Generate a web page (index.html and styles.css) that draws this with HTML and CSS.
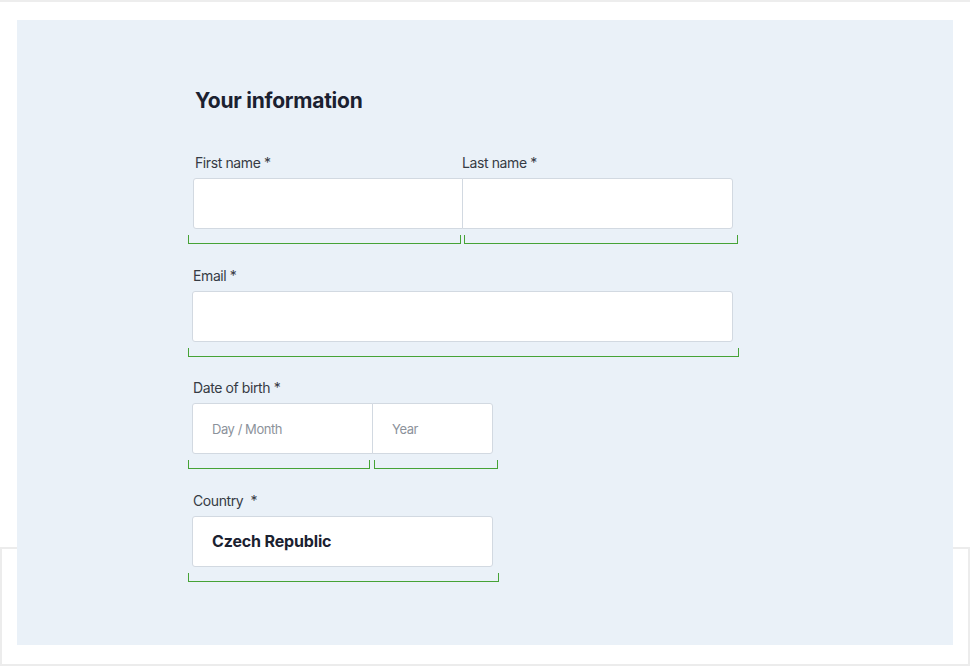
FILE: index.html
```html
<!DOCTYPE html>
<html lang="en">
<head>
<meta charset="utf-8">
<title>Your information</title>
<link rel="stylesheet" href="styles.css">
</head>
<body>
<div class="page">
  <main class="panel">
    <form class="form">
      <h1 class="title">Your information</h1>
      <div class="groups">
        <section class="group">
          <div class="labels labels-names">
            <span class="label label-first">First name *</span>
            <span class="label">Last name *</span>
          </div>
          <div class="inputs inputs-names">
            <div class="input input-first input-join-left"></div>
            <div class="input input-last input-join-right"></div>
          </div>
          <div class="brackets brackets-names">
            <span class="bracket b-first"></span>
            <span class="bracket b-last"></span>
          </div>
        </section>

        <section class="group">
          <div class="labels labels-std">
            <span class="label">Email *</span>
          </div>
          <div class="inputs inputs-std">
            <div class="input input-email"></div>
          </div>
          <div class="brackets">
            <span class="bracket b-email"></span>
          </div>
        </section>

        <section class="group">
          <div class="labels labels-std">
            <span class="label">Date of birth *</span>
          </div>
          <div class="inputs inputs-std">
            <div class="input input-day input-join-left"><span class="placeholder">Day / Month</span></div>
            <div class="input input-year input-join-right"><span class="placeholder">Year</span></div>
          </div>
          <div class="brackets brackets-dob">
            <span class="bracket b-day"></span>
            <span class="bracket b-year"></span>
          </div>
        </section>

        <section class="group">
          <div class="labels labels-std">
            <span class="label">Country&nbsp; *</span>
          </div>
          <div class="inputs inputs-std">
            <div class="input input-country"><span class="value">Czech Republic</span></div>
          </div>
          <div class="brackets">
            <span class="bracket b-country"></span>
          </div>
        </section>
      </div>
    </form>
  </main>
</div>
</body>
</html>
```

FILE: styles.css
```css
* {
  box-sizing: border-box;
}

html, body {
  margin: 0;
  padding: 0;
  background: #ffffff;
}

body {
  font-family: "Inter", "Noto Sans", "Liberation Sans", sans-serif;
  color: #3b4049;
  width: 970px;
  height: 666px;
  overflow: hidden;
}

.page {
  position: relative;
  height: 666px;
  border-top: 2px solid #ededed;
  padding: 18px 17px 0 17px;
}

.page::before {
  content: "";
  position: absolute;
  left: 0;
  right: 0;
  top: 545px;
  bottom: 0;
  border: 2px solid #ececec;
  z-index: 0;
}

.panel {
  position: relative;
  z-index: 1;
  height: 625px;
  background: #eaf1f8;
  padding: 68px 0 0 171px;
}

.form {
  width: 552px;
  margin: 0;
}

.title {
  margin: 0 0 40px 0;
  padding-left: 7px;
  font-size: 21px;
  line-height: 26px;
  font-weight: 700;
  color: #1b2130;
  letter-spacing: -0.25px;
}

.groups {
  display: flex;
  flex-direction: column;
  gap: 22.5px;
}

.group {
  display: flex;
  flex-direction: column;
}

.labels {
  display: flex;
  height: 17px;
  margin-bottom: 7px;
}

.labels-names {
  padding-left: 7px;
}

.labels-std {
  padding-left: 5px;
}

.label {
  font-size: 14px;
  line-height: 17px;
  color: #363b44;
  white-space: nowrap;
  letter-spacing: -0.4px;
}

.label-first {
  width: 267px;
}

.inputs {
  display: flex;
}

.inputs-names {
  padding-left: 5px;
}

.inputs-std {
  padding-left: 4px;
}

.input {
  height: 51px;
  background: #ffffff;
  border: 1px solid #d2d9e1;
  border-radius: 3px;
  display: flex;
  align-items: center;
  padding-left: 19px;
}

.input-join-left {
  border-top-right-radius: 0;
  border-bottom-right-radius: 0;
}

.input-join-right {
  margin-left: -1px;
  border-top-left-radius: 0;
  border-bottom-left-radius: 0;
}

.input-first { width: 270px; }
.input-last { width: 271px; }
.input-email { width: 541px; }
.input-day { width: 181px; }
.input-year { width: 121px; }
.input-country { width: 301px; }

.placeholder {
  font-size: 13px;
  color: #8c929b;
  letter-spacing: -0.45px;
}

.value {
  font-size: 16px;
  font-weight: 700;
  color: #1b2130;
  letter-spacing: -0.15px;
}

.brackets {
  display: flex;
  margin-top: 6px;
}

.brackets-names {
  gap: 3px;
}

.brackets-dob {
  gap: 4px;
}

.bracket {
  display: block;
  height: 9px;
  border: 1px solid #46a336;
  border-top: none;
}

.b-first { width: 273px; }
.b-last { width: 274px; }
.b-email { width: 551px; }
.b-day { width: 182px; }
.b-year { width: 124px; }
.b-country { width: 311px; }
```
